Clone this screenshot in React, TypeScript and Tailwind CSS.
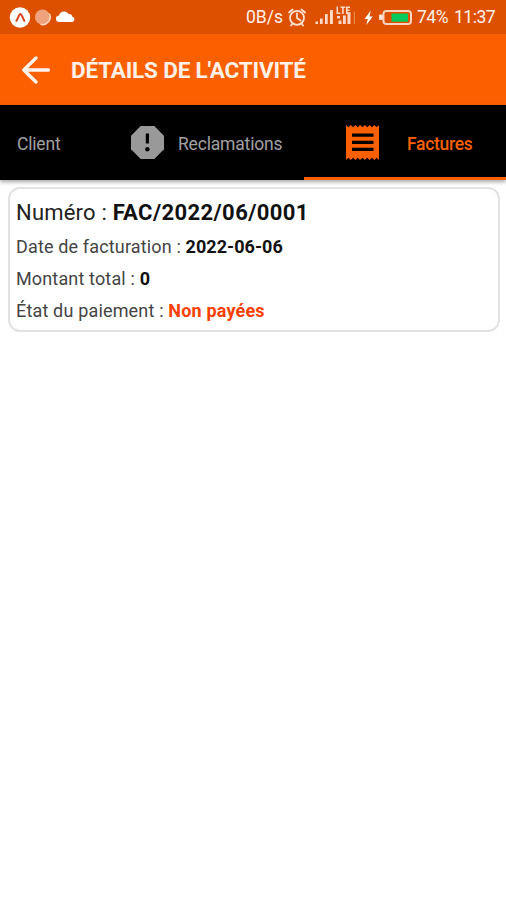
const invoice = {
  number: 'FAC/2022/06/0001',
  date: '2022-06-06',
  total: 0,
  status: 'Non payées',
};

function StatusBar() {
  return (
    <div className="flex h-[34px] items-center bg-[#dc5000] pt-px text-[17.5px] text-[#fff0e8]">
      <svg width="80" height="34" viewBox="0 1 80 34" className="shrink-0">
        <circle cx="20" cy="17.5" r="10.2" fill="#fff" />
        <path d="M16.4 20.8C18 18.6 19 14 20.4 14s2.3 4.6 4 6.8" fill="none" stroke="#d9431a" strokeWidth="2" strokeLinecap="round" />
        <circle cx="42.5" cy="17" r="7.6" fill="#efa27c" />
        <path d="M49.3 13.5a7.6 7.6 0 0 1-8.8 10.8" fill="none" stroke="#fbd9c8" strokeWidth="1.5" />
        <g fill="#fff">
          <circle cx="59.3" cy="18.7" r="3.3" />
          <circle cx="64" cy="16.4" r="5" />
          <circle cx="69" cy="17.3" r="3.2" />
          <circle cx="71.5" cy="19.2" r="2.8" />
          <path d="M59.3 17H71.5v5H59.3z" />
        </g>
      </svg>
      <span className="ml-[166px] w-[42px] shrink-0 whitespace-nowrap">0B/s</span>
      <svg width="128" height="34" viewBox="288 1 128 34" className="shrink-0">
        <g fill="none" stroke="#ffe0d2" strokeWidth="1.8" strokeLinecap="round">
          <circle cx="297" cy="17.8" r="7" />
          <path d="M297 13.5v4.5l3.5 2.5M289 12.5l3.5-3M305 12.5l-3.5-3M292.5 23.5l-1.5 2M301.5 23.5l1.5 2" />
        </g>
        <g fill="#ffd9c8">
          <path d="M315.500 21.500h2.500v2.500h-2.500zM320 18.500h2.700v5.500H320zM325 14h2.700v10H325zM330 10h2.900v14H330z" />
          <path d="M337 16h3v2.500h-3zM338.500 20.500h3v3.500h-3zM343 15.500h2.800v8.500H343zM347.500 12.500h3v11.500h-3z" />
          <path d="M353.800 11.500h1.200v12.500h-1.200z" opacity=".4" />
          <path d="M336.500 6.500h1.500v6h2.500V14h-4zM340.500 6.500h4.800V8h-1.600v6h-1.600V8h-1.600zM346 6.500h4V8h-2.400v1.500h2V11h-2v1.500h2.400V14h-4z" />
          <path d="M370.800 10.500l-6.300 8.500h3.300l-1.500 6 6.500-8.500h-3.300z" fill="#fff" />
        </g>
        <rect x="379" y="14.5" width="4" height="5.5" rx="1" fill="#ffe3d6" />
        <rect x="383.5" y="11" width="27.5" height="13" rx="3" fill="none" stroke="#ffd3bf" strokeWidth="2" />
        <path d="M391.500 13.500h16.500v8.200h-16.500z" fill="#08c95b" />
      </svg>
      <span className="ml-px w-[37px] shrink-0 whitespace-nowrap tracking-[-0.5px]">74%</span>
      <span className="whitespace-nowrap tracking-[-0.5px]">11:37</span>
    </div>
  );
}

function Header() {
  return (
    <header className="flex h-[71px] items-center bg-[#fb6000] pl-[21px]">
      <svg width="30" height="28" viewBox="0 0 30 28" fill="none" stroke="#fff3ed" strokeWidth="3.3" strokeLinecap="round" strokeLinejoin="round">
        <path d="M27.500 14H2.800M15 2L2.800 14 15 26" />
      </svg>
      <h1 className="ml-5 pt-0.5 whitespace-nowrap text-[22.5px] leading-none font-bold tracking-[-0.17px] text-[#fff0e8]">
        DÉTAILS DE L'ACTIVITÉ
      </h1>
    </header>
  );
}

function ReportIcon() {
  return (
    <svg width="33" height="33" viewBox="0 0 33 33" className="shrink-0">
      <path d="M9.700 0h13.600L33 9.700v13.600L23.300 33H9.700L0 23.300V9.700z" fill="#999" />
      <path d="M14.800 7.500h3.200v10h-3.200z" fill="#000" />
      <circle cx="16.4" cy="23.2" r="2.2" fill="#000" />
    </svg>
  );
}

function ReceiptIcon() {
  return (
    <svg width="33" height="35" viewBox="0 0 33 35" className="shrink-0">
      <path
        d="M0 0l2.350 2.200L4.700 0l2.350 2.200L9.400 0l2.350 2.200L14.100 0l2.400 2.200L18.900 0l2.350 2.200L23.600 0l2.350 2.200L28.300 0l2.350 2.200L33 0v35l-2.350-2.200L28.300 35l-2.350-2.200L23.600 35l-2.350-2.200L18.900 35l-2.400-2.200L14.100 35l-2.350-2.200L9.400 35l-2.350-2.200L4.700 35l-2.350-2.200L0 35z"
        fill="#fb6000"
      />
      <path d="M6 8.500h21.500v3.200H6zM6 15.700h21.500v3.200H6zM6 22.700h21.500v3.200H6z" fill="#000" />
    </svg>
  );
}

function Tabs() {
  return (
    <nav className="relative z-10 flex h-[75px] bg-black text-[17.5px] tracking-[-0.18px] text-[#a0a0a0] shadow-[0_2px_4px_rgba(0,0,0,0.35)]">
      <button className="w-[101px] pt-[3px] pl-[17px] text-left">Client</button>
      <button className="flex w-[203px] items-center pl-[30px]">
        <ReportIcon />
        <span className="ml-[14px] pt-[3px]">Reclamations</span>
      </button>
      <button className="flex flex-1 items-center border-b-[3px] border-[#fb6000] pt-[3px] pl-[42px] text-[#fb6000]">
        <ReceiptIcon />
        <span className="ml-7 pt-[3px] font-medium tracking-[-0.3px]">Factures</span>
      </button>
    </nav>
  );
}

export default function App() {
  return (
    <div className="h-[900px] w-[506px] overflow-hidden bg-white font-['Roboto',sans-serif]">
      <StatusBar />
      <Header />
      <Tabs />

      <main className="pt-[7px] pr-1.5 pl-[7.5px]">
        <div className="h-[145px] rounded-[12px] border-2 border-[#e2e2e2] bg-white px-[6.5px] pt-2 text-[18px] text-[#444]">
          <p className="h-[34px] text-[22px] leading-[32px] tracking-[0.2px] whitespace-nowrap text-[#222]">
            Numéro : <strong className="font-bold tracking-[0.4px] text-[#111]">{invoice.number}</strong>
          </p>
          <p className="h-8 leading-8 tracking-[0.15px] whitespace-nowrap">
            Date de facturation : <strong className="font-bold tracking-[0.05px] text-[#111]">{invoice.date}</strong>
          </p>
          <p className="h-8 leading-8 tracking-[0.15px] whitespace-nowrap">
            Montant total : <strong className="font-bold text-[#111]">{invoice.total}</strong>
          </p>
          <p className="h-8 leading-8 tracking-[0.17px] whitespace-nowrap">
            État du paiement : <strong className="font-bold text-[#fb3f00]">{invoice.status}</strong>
          </p>
        </div>
      </main>
    </div>
  );
}
